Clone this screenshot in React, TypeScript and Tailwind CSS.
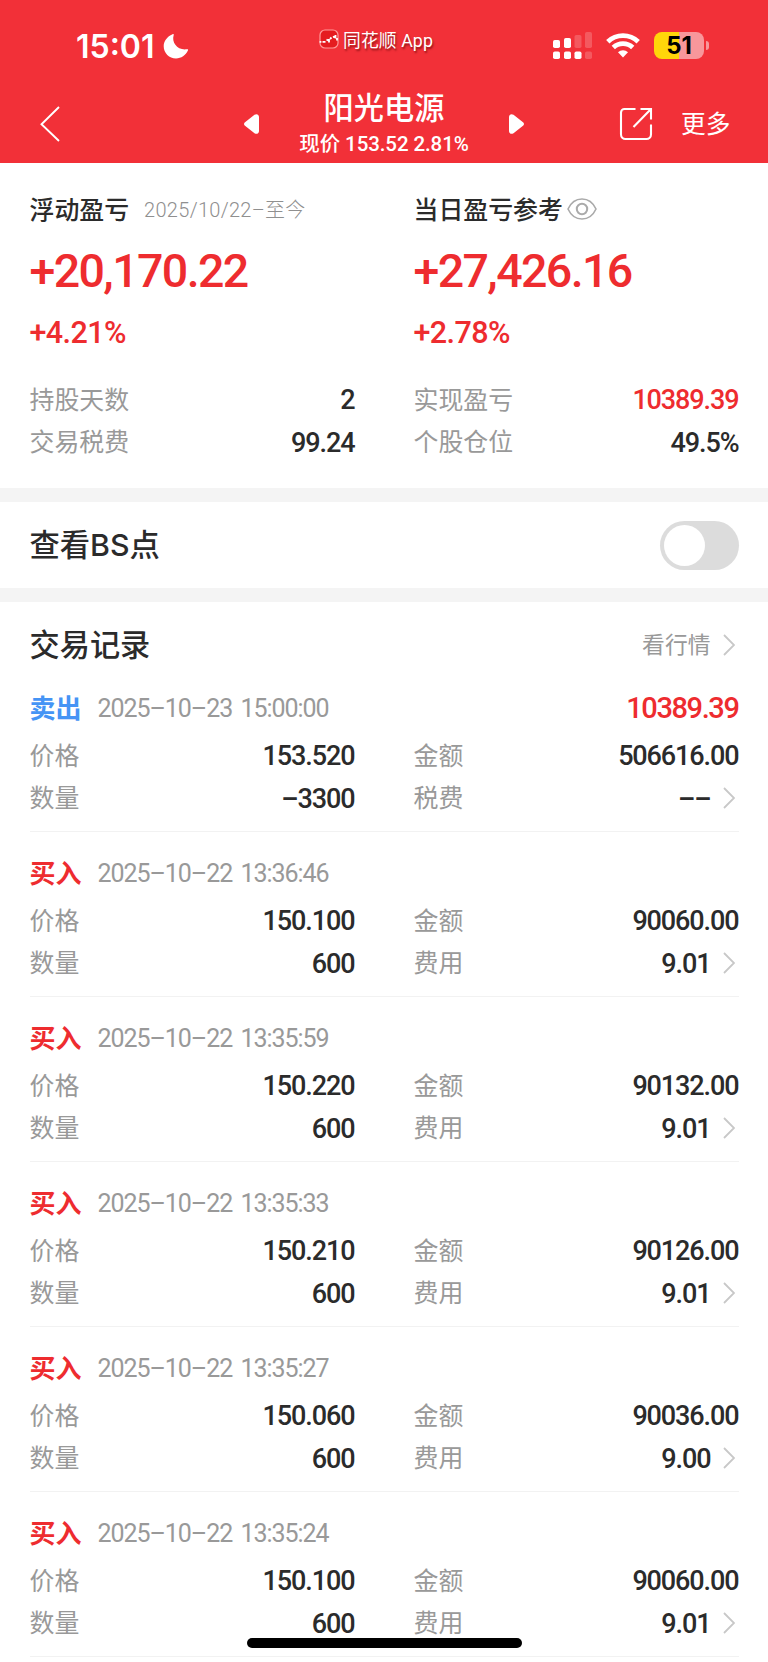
import type { ReactNode } from 'react';
import clsx from 'clsx';

type Trade = {
  side: 'buy' | 'sell';
  time: string;
  profit?: string;
  price: string;
  amount: string;
  quantity: string;
  fee: string;
};

const TRADES: Trade[] = [
  {
    side: 'sell',
    time: '2025–10–23 15:00:00',
    profit: '10389.39',
    price: '153.520',
    amount: '506616.00',
    quantity: '–3300',
    fee: '––',
  },
  { side: 'buy', time: '2025–10–22 13:36:46', price: '150.100', amount: '90060.00', quantity: '600', fee: '9.01' },
  { side: 'buy', time: '2025–10–22 13:35:59', price: '150.220', amount: '90132.00', quantity: '600', fee: '9.01' },
  { side: 'buy', time: '2025–10–22 13:35:33', price: '150.210', amount: '90126.00', quantity: '600', fee: '9.01' },
  { side: 'buy', time: '2025–10–22 13:35:27', price: '150.060', amount: '90036.00', quantity: '600', fee: '9.00' },
  { side: 'buy', time: '2025–10–22 13:35:24', price: '150.100', amount: '90060.00', quantity: '600', fee: '9.01' },
];

function ChevronRight() {
  return (
    <svg className="mr-1 ml-3 h-[22px] w-3 shrink-0" viewBox="0 0 12 22" fill="none" aria-hidden="true">
      <path d="M1 1l10 10L1 21" stroke="#c8c8c8" strokeWidth="1.8" />
    </svg>
  );
}

function Field({
  label,
  value,
  red,
  chevron,
}: {
  label: string;
  value: string;
  red?: boolean;
  chevron?: boolean;
}) {
  return (
    <div className="flex h-[42.5px] items-center justify-between">
      <span className="pt-1 text-[24.9px] leading-none text-[#999]">{label}</span>
      <span className="flex items-center">
        <span
          className={clsx(
            'pt-[3px] text-[27px] leading-none font-medium tracking-[-1.1px]',
            red ? 'text-[#ee2c2f]' : 'text-[#2b2b2b]',
          )}
        >
          {value}
        </span>
        {chevron && <ChevronRight />}
      </span>
    </div>
  );
}

function StatusBar() {
  return (
    <div className="flex h-[78px] items-start text-white">
      <div className="mt-[32px] ml-[76px] flex h-[30px] w-[243px] items-center">
        <span className="font-[Inter] text-[32px] leading-none font-semibold">15:01</span>
        <svg className="mb-0.5 ml-2 size-[26px]" viewBox="0 0 26 26" fill="currentColor" aria-hidden="true">
          <path d="M9.5 1.2C10.5.7 11 1 10.7 2 8.3 9.5 14.5 17.5 23.7 16.3c1.3-.2 1.7.3 1.2 1.2C22.7 22.3 18.3 25.4 13 25.4 6.2 25.4.7 20 .7 13.2.7 8 4.2 3.4 9.5 1.2z" />
        </svg>
      </div>

      <div className="mt-[29px] flex h-5 items-center">
        <svg className="size-5" viewBox="0 0 20 20" fill="none" aria-hidden="true">
          <rect x="1" y="1" width="18" height="18" rx="5" fill="#e51c20" stroke="#ff9a9a" strokeWidth="1.2" />
          <path
            d="M1.5 12v1.8M3.5 12.800h3M7.500 10.500l1.800 1M10 10v3.500M11 10l1.500-1.500M14 8.200l2-.8M16.500 6v3.500M18 9v2.500"
            stroke="#fff"
            strokeWidth="1.8"
          />
        </svg>
        <span className="ml-1 pt-1 text-[17.8px] leading-none tracking-[0.1px] [text-shadow:1px_2px_2px_rgba(80,0,0,0.6)]">
          同花顺 App
        </span>
      </div>

      <div className="mt-8 ml-auto flex h-[27px] items-center">
        <svg className="h-[27px] w-[39px]" viewBox="0 0 39 27" fill="currentColor" aria-hidden="true">
          <rect x="0" y="8" width="7" height="8" rx="1.8" />
          <rect x="11" y="6" width="7" height="10" rx="1.8" />
          <rect x="21.5" y="3" width="7" height="13" rx="1.8" opacity="0.2" />
          <rect x="32" y="0" width="7" height="16" rx="1.8" opacity="0.2" />
          <rect x="0" y="19.5" width="7" height="7.5" rx="1.8" />
          <rect x="11" y="19.5" width="7" height="7.5" rx="1.8" />
          <rect x="21.5" y="19.5" width="7" height="7.5" rx="1.8" />
          <rect x="32" y="19.5" width="7" height="7.5" rx="1.8" opacity="0.2" />
        </svg>
        <svg className="ml-3.5 h-[25px] w-[34px]" viewBox="0 0 34 25" fill="none" aria-hidden="true">
          <path d="M1.8 8.8a22 22 0 0 1 30.4 0M7.3 14.600a14 14 0 0 1 19.4 0" stroke="#fff" strokeWidth="4.8" />
          <path d="M17 24.5l-5-5.200a7.200 7.200 0 0 1 10 0z" fill="#fff" />
        </svg>
        <div className="ml-3.5 flex h-[27px] w-[50px] items-center justify-center rounded-[8px] bg-[linear-gradient(90deg,#ffd60a_51%,#f8979b_51%)] font-[Inter] text-[24px] leading-none font-bold text-black">
          51
        </div>
        <div className="mr-[59px] ml-0.5 h-[9px] w-[3px] rounded-r-full bg-[#f8979b]" />
      </div>
    </div>
  );
}

function NavBar() {
  return (
    <div className="flex h-[85px] items-center text-white">
      <div className="flex h-full w-[244px] items-center pl-10">
        <svg className="mt-[6px] h-9 w-5" viewBox="0 0 20 36" fill="none" aria-hidden="true">
          <path d="M19 1L1.5 18.2 19 35" stroke="currentColor" strokeWidth="1.9" />
        </svg>
      </div>
      <svg className="mt-[7px] h-5 w-[15px]" viewBox="0 0 15 20" fill="currentColor" aria-hidden="true">
        <path d="M1 8.300L10.500.8C12.500-.6 15 .3 15 3v14c0 2.700-2.500 3.600-4.500 2.200L1 11.700c-1.300-1-1.300-2.400 0-3.400z" />
      </svg>
      <div className="flex w-[250px] flex-col items-center">
        <div className="mt-[11px] text-[30.2px] leading-[36px] font-medium">阳光电源</div>
        <div className="text-[20.5px] leading-[34px] font-medium tracking-[-0.1px]">现价 153.52 2.81%</div>
      </div>
      <svg className="mt-[7px] h-5 w-[15px]" viewBox="0 0 15 20" fill="currentColor" aria-hidden="true">
        <path d="M14 8.300L4.500.8C2.500-.6 0 .3 0 3v14c0 2.700 2.500 3.600 4.500 2.200l9.500-7.500c1.300-1 1.300-2.400 0-3.400z" />
      </svg>
      <svg
        className="mt-[6px] ml-[95px] size-[34px]"
        viewBox="0 0 34 34"
        fill="none"
        stroke="currentColor"
        strokeWidth="2.1"
        aria-hidden="true"
      >
        <path d="M16.5 2H5.500A3.500 3.500 0 0 0 2 5.500v22A4.500 4.500 0 0 0 6.500 32h21a4.500 4.500 0 0 0 4.500-4.500V17.500" />
        <path d="M14.500 20L31.500 2.500M21.500 2H32v10.500" />
      </svg>
      <span className="mt-2.5 ml-[28px] text-[24.7px] leading-none">更多</span>
    </div>
  );
}

function ProfitColumn({
  title,
  extra,
  profit,
  percent,
  children,
}: {
  title: string;
  extra: ReactNode;
  profit: string;
  percent: string;
  children: ReactNode;
}) {
  return (
    <div>
      <div className="flex h-10 items-center">
        <span className="pt-1 text-[24.9px] leading-none font-medium text-[#2b2b2b]">{title}</span>
        {extra}
      </div>
      <div className="mt-[15px] h-[54px] text-[46.5px] leading-[54px] font-medium tracking-[-1.6px] text-[#ee2c2f]">
        {profit}
      </div>
      <div className="mt-[15px] h-10 text-[30.5px] leading-10 font-medium tracking-[-0.6px] text-[#ee2c2f]">
        {percent}
      </div>
      <div className="mt-[25px]">{children}</div>
    </div>
  );
}

function TradeItem({ trade }: { trade: Trade }) {
  const isSell = trade.side === 'sell';
  return (
    <div className="h-[165px] border-b border-[#f2f2f2] pt-5">
      <div className="flex h-10 items-center">
        <span
          className={clsx('pt-1 text-[26px] leading-none font-bold', isSell ? 'text-[#4594f5]' : 'text-[#ee2c2f]')}
        >
          {isSell ? '卖出' : '买入'}
        </span>
        <span className="ml-4 pt-[3px] text-[25px] leading-none tracking-[-1.05px] text-[#999] [word-spacing:3.2px]">
          {trade.time}
        </span>
        {trade.profit && (
          <span className="ml-auto pt-0.5 text-[29px] leading-none font-medium tracking-[-1.4px] text-[#ee2c2f]">
            {trade.profit}
          </span>
        )}
      </div>
      <div className="mt-[7px] grid grid-cols-2 gap-x-[59px]">
        <Field label="价格" value={trade.price} />
        <Field label="金额" value={trade.amount} />
        <Field label="数量" value={trade.quantity} />
        <Field label={isSell ? '税费' : '费用'} value={trade.fee} chevron />
      </div>
    </div>
  );
}

export default function App() {
  return (
    <div className="relative h-[1662px] w-[768px] overflow-hidden bg-white font-[Roboto,'Noto_Sans_CJK_SC',sans-serif]">
      <header className="h-[163px] bg-[#f23038]">
        <StatusBar />
        <NavBar />
      </header>

      <section className="grid h-[325px] grid-cols-2 gap-x-[59px] px-[29.5px] pt-[26px]">
        <ProfitColumn
          title="浮动盈亏"
          extra={
            <span className="ml-[15px] pt-0.5 text-[20px] leading-none font-light tracking-[0.3px] text-[#8f8f8f]">
              2025/10/22–至今
            </span>
          }
          profit="+20,170.22"
          percent="+4.21%"
        >
          <Field label="持股天数" value="2" />
          <Field label="交易税费" value="99.24" />
        </ProfitColumn>
        <ProfitColumn
          title="当日盈亏参考"
          extra={
            <svg
              className="ml-1 h-[22px] w-[30px]"
              viewBox="0 0 30 22"
              fill="none"
              stroke="#aaa"
              strokeWidth="1.6"
              aria-hidden="true"
            >
              <path d="M1 11C4 4.5 9 1 15 1s11 3.500 14 10c-3 6.500-8 10-14 10S4 17.500 1 11z" />
              <circle cx="15" cy="11" r="5.2" strokeWidth="2" />
            </svg>
          }
          profit="+27,426.16"
          percent="+2.78%"
        >
          <Field label="实现盈亏" value="10389.39" red />
          <Field label="个股仓位" value="49.5%" />
        </ProfitColumn>
      </section>

      <section className="flex h-[100px] items-center justify-between border-t-[14px] border-[#f4f4f4] px-[29.5px]">
        <h2 className="pt-0.5 text-[30.3px] leading-none font-medium text-[#2b2b2b]">
          查看<span className="font-[Inter]">BS</span>点
        </h2>
        <div className="flex h-[49px] w-[79px] items-center rounded-full bg-[#dcdcdc] pl-1">
          <div className="size-[41px] rounded-full bg-white" />
        </div>
      </section>

      <section className="border-t-[14px] border-[#f4f4f4]">
        <div className="px-[29.5px]">
          <div className="flex h-[65px] items-center justify-between pt-[21px]">
            <h2 className="pt-[3px] text-[30.2px] leading-none font-medium text-[#2b2b2b]">交易记录</h2>
            <div className="flex items-center">
              <span className="pt-[3px] text-[22.8px] leading-none text-[#999]">看行情</span>
              <ChevronRight />
            </div>
          </div>
          {TRADES.map((trade) => (
            <TradeItem key={trade.time} trade={trade} />
          ))}
        </div>
      </section>

      {/* Home indicator */}
      <div className="absolute bottom-[14.5px] left-[247px] h-[9.5px] w-[274.5px] rounded-full bg-black" />
    </div>
  );
}
